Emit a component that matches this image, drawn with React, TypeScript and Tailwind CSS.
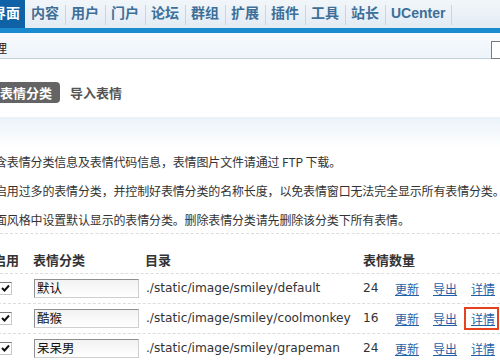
import React from "react";

const cjk = { fontFamily: '"Noto Sans CJK SC", "Noto Sans", sans-serif' };
const lat = { fontFamily: '"DejaVu Sans", "Noto Sans CJK SC", sans-serif' };

const tabs = ["内容", "用户", "门户", "论坛", "群组", "扩展", "插件", "工具", "站长"];

function Check() {
  return (
    <span className="ml-[6px] flex h-[13px] w-[13px] items-center justify-center border border-t-[#7a7a7a] border-l-[#7a7a7a] border-b-[#c8c8c8] border-r-[#c8c8c8] bg-white">
      <svg width="9" height="9" viewBox="0 0 9 9">
        <path d="M1 4 L3.5 6.5 L8 1.5" stroke="#111" strokeWidth="2" fill="none" />
      </svg>
    </span>
  );
}

function Row({ name, dir, count, boxed }: { name: string; dir: string; count: string; boxed?: boolean }) {
  return (
    <div className="flex h-[30px] items-center border-b border-dashed border-[#dcdcdc]">
      <div className="w-[40px] shrink-0">
        <Check />
      </div>
      <div className="w-[112px] shrink-0">
        <div
          className="ml-[1px] h-[19px] w-[105px] border border-t-[#8f8f8f] border-l-[#8f8f8f] border-r-[#cfcfcf] border-b-[#cfcfcf] bg-gradient-to-b from-[#f2f2f2] to-white pl-[2px] text-[12.5px] leading-[16px] text-[#111]"
          style={cjk}
        >
          {name}
        </div>
      </div>
      <div className="w-[217px] shrink-0 pl-[1px] text-[12.2px] text-[#333]" style={lat}>
        {dir}
      </div>
      <div className="w-[33px] shrink-0 pl-[1px] text-[12.2px] text-[#333]" style={lat}>
        {count}
      </div>
      <div className="w-[38px] shrink-0 text-[12px] text-[#1f5fa8] underline" style={cjk}>
        更新
      </div>
      <div className="w-[38px] shrink-0 text-[12px] text-[#1f5fa8] underline" style={cjk}>
        导出
      </div>
      <div className="shrink-0 text-[12px] text-[#1f5fa8]" style={cjk}>
        <span className="relative underline">
          详情
          {boxed && (
            <span className="absolute -left-[7px] -right-[4px] -top-[3px] -bottom-[3px] border-2 border-[#e5431f]" />
          )}
        </span>
      </div>
    </div>
  );
}

export default function App() {
  return (
    <div className="relative h-[361px] w-[500px] overflow-hidden bg-white" style={cjk}>
      {/* top nav */}
      <div className="flex h-[28px] items-stretch bg-gradient-to-b from-[#f2f6fa] to-[#e3ebf3]">
        <div className="-ml-[8px] mr-[1px] bg-[#0f62a5] pr-[5px] pt-[2px] text-[14px] font-bold leading-[20px] text-white">
          界面
        </div>
        {tabs.map((t) => (
          <div key={t} className="flex items-start pt-[2px]">
            <span className="pl-[5px] pr-[6px] text-[14px] font-bold leading-[20px] text-[#3d6f98]">{t}</span>
            <span className="mt-[3px] h-[20px] w-[1px] bg-[#c9d6e2]" />
          </div>
        ))}
        <div className="flex items-start pt-[3px]">
          <span
            className="pl-[5px] pr-[6px] text-[14px] font-bold leading-[20px] text-[#3d6f98]"
            style={{ fontFamily: '"Liberation Sans", sans-serif' }}
          >
            UCenter
          </span>
          <span className="mt-[2px] h-[20px] w-[1px] bg-[#c9d6e2]" />
        </div>
      </div>
      <div className="h-[5px] bg-[#1b8bd0]" />
      {/* sub header */}
      <div className="flex h-[26px] items-start border-b border-[#c2d2df] bg-gradient-to-b from-[#f7fafd] to-[#eef4fa]">
        <span className="-ml-[17px] pt-[7px] text-[12px] leading-[16px] text-[#222]">管理</span>
        <span className="ml-auto -mr-[9px] mt-[8px] h-[18px] w-[18px] border border-[#7a7a7a] bg-white" />
      </div>
      {/* tabs */}
      <div className="flex h-[58px] items-start bg-white pt-[23px]">
        <span className="-ml-[8px] h-[21px] rounded-[4px] bg-[#646464] pl-[8px] pr-[8px] text-[13px] font-bold leading-[21px] text-white">
          表情分类
        </span>
        <span className="ml-[10px] text-[13px] font-bold leading-[21px] text-[#555]">导入表情</span>
      </div>
      {/* tips band */}
      <div className="h-[30px] bg-gradient-to-b from-[#eaf2f9] to-white" />
      <div className="h-[86px] -ml-[5px] text-[12px] leading-[29px] tracking-[-0.15px] text-[#333]">
        <div className="whitespace-nowrap">含表情分类信息及表情代码信息，表情图片文件请通过 FTP 下载。</div>
        <div className="whitespace-nowrap">启用过多的表情分类，并控制好表情分类的名称长度，以免表情窗口无法完全显示所有表情分类。</div>
        <div className="whitespace-nowrap">面风格中设置默认显示的表情分类。删除表情分类请先删除该分类下所有表情。</div>
      </div>
      {/* table */}
      <div className="border-t border-dashed border-[#dcdcdc]">
        <div className="flex h-[40px] items-start border-b border-dashed border-[#dcdcdc] pt-[17px] text-[13px] font-bold leading-[18px] text-[#333]">
          <div className="-ml-[7px] w-[40px] shrink-0">启用</div>
          <div className="w-[112px] shrink-0">表情分类</div>
          <div className="w-[217px] shrink-0">目录</div>
          <div className="pl-[1px]">表情数量</div>
        </div>
        <div className="-ml-[7px]">
          <Row name="默认" dir="./static/image/smiley/default" count="24" />
          <Row name="酷猴" dir="./static/image/smiley/coolmonkey" count="16" boxed />
          <Row name="呆呆男" dir="./static/image/smiley/grapeman" count="24" />
        </div>
      </div>
    </div>
  );
}
